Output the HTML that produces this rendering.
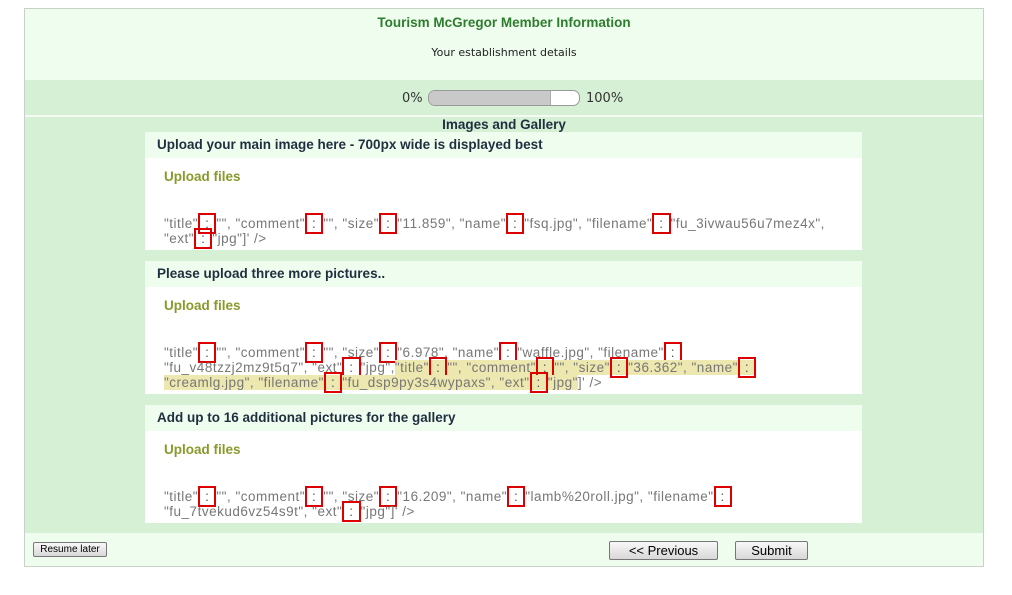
<!DOCTYPE html>
<html><head><style>
body{margin:0;background:#fff;font-family:"Liberation Sans",sans-serif;width:1012px;height:595px;position:relative;overflow:hidden}
.outer{position:absolute;left:24px;top:8px;width:958px;height:557px;border:1px solid #c8d0c8;background:#d5f0d5}
.hdr{position:absolute;left:0;top:0;width:958px;height:71px;background:#effdee;text-align:center}
.t1{position:absolute;top:6px;width:100%;color:#2e7d2e;font-weight:bold;font-size:13.5px}
.t2{position:absolute;top:37px;width:100%;color:#222;font-size:11px;font-family:"DejaVu Sans",sans-serif}
.prog{position:absolute;top:72px;width:958px;height:34px;border-bottom:2px solid #f3fbf2;font-size:13px;color:#333;font-family:"DejaVu Sans",sans-serif}
.bar{position:absolute;left:403px;top:9px;width:150px;height:14px;border:1px solid #999;border-radius:7px;background:#fff;overflow:hidden}
.bar div{width:121px;height:14px;background:#c9c9c9;border-right:1px solid #aaa}
.sec{position:absolute;top:108px;width:100%;text-align:center;font-weight:bold;font-size:13.5px;color:#1f2f3f}
.panel{position:absolute;left:120px;width:717px;background:#fff}
.ph{height:26px;background:#effdee;font-weight:bold;font-size:13.5px;color:#1f2f3f;padding-left:12px;line-height:26px}
.up{color:#8a9a2a;font-weight:bold;font-size:13.5px;position:absolute;left:19px}
.txt{position:absolute;left:19px;width:700px;font-size:13.5px;color:#777;line-height:15px;white-space:nowrap;letter-spacing:0.5px}
.r{border:2px solid #d00;padding:1px 5px;color:#555}
.hl{background:#ede7b0}
.foot{position:absolute;left:0;top:524px;width:958px;height:33px;background:#effdee}
.btn{position:absolute;border:1px solid #777;border-radius:2px;background:linear-gradient(#f8f8f8,#d8d8d8);font-size:13px;text-align:center;color:#000}
</style></head><body>
<div class="outer">
 <div class="hdr"><div class="t1">Tourism McGregor Member Information</div><div class="t2">Your establishment details</div></div>
 <div class="prog"><span style="position:absolute;left:377px;top:10px">0%</span><div class="bar"><div></div></div><span style="position:absolute;left:561px;top:10px">100%</span></div>
 <div class="sec">Images and Gallery</div>
 <div class="panel" style="top:123px;height:118px"><div class="ph">Upload your main image here - 700px wide is displayed best</div>
  <div class="up" style="top:37px">Upload files</div>
  <div class="txt" style="top:84px">"title"<span class="r">:</span>"", "comment"<span class="r">:</span>"", "size"<span class="r">:</span>"11.859", "name"<span class="r">:</span>"fsq.jpg", "filename"<span class="r">:</span>"fu_3ivwau56u7mez4x",<br>"ext"<span class="r">:</span>"jpg"]' /&gt;</div></div>
 <div class="panel" style="top:252px;height:133px"><div class="ph">Please upload three more pictures..</div>
  <div class="up" style="top:37px">Upload files</div>
  <div class="txt" style="top:84px">"title"<span class="r">:</span>"", "comment"<span class="r">:</span>"", "size"<span class="r">:</span>"6.978", "name"<span class="r">:</span>"waffle.jpg", "filename"<span class="r">:</span><br>"fu_v48tzzj2mz9t5q7", "ext"<span class="r">:</span>"jpg",<span class="hl">"title"<span class="r">:</span>"", "comment"<span class="r">:</span>"", "size"<span class="r">:</span>"36.362", "name"<span class="r">:</span><br>"creamlg.jpg", "filename"<span class="r">:</span>"fu_dsp9py3s4wypaxs", "ext"<span class="r">:</span>"jpg"</span>]' /&gt;</div></div>
 <div class="panel" style="top:396px;height:118px"><div class="ph">Add up to 16 additional pictures for the gallery</div>
  <div class="up" style="top:37px">Upload files</div>
  <div class="txt" style="top:84px">"title"<span class="r">:</span>"", "comment"<span class="r">:</span>"", "size"<span class="r">:</span>"16.209", "name"<span class="r">:</span>"lamb%20roll.jpg", "filename"<span class="r">:</span><br>"fu_7tvekud6vz54s9t", "ext"<span class="r">:</span>"jpg"]' /&gt;</div></div>
 <div class="foot">
  <div class="btn" style="left:8px;top:9px;width:72px;height:13px;font-size:10px;line-height:13px">Resume later</div>
  <div class="btn" style="left:584px;top:8px;width:107px;height:17px;line-height:17px">&lt;&lt; Previous</div>
  <div class="btn" style="left:710px;top:8px;width:71px;height:17px;line-height:17px">Submit</div>
 </div>
</div>
</body></html>
